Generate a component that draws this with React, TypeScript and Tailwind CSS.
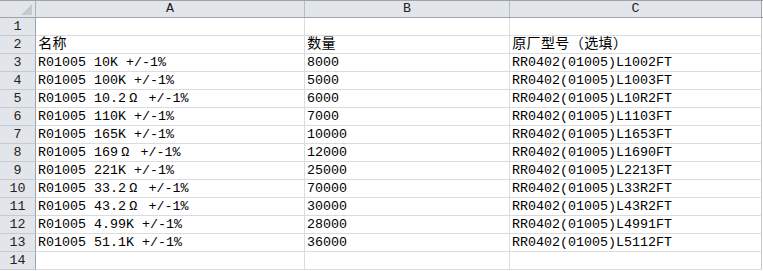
import React from 'react';

const rows: [string, string, string][] = [
  ['', '', ''],
  ['名称', '数量', '原厂型号（选填）'],
  ['R01005 10K +/-1%', '8000', 'RR0402(01005)L1002FT'],
  ['R01005 100K +/-1%', '5000', 'RR0402(01005)L1003FT'],
  ['R01005 10.2Ω +/-1%', '6000', 'RR0402(01005)L10R2FT'],
  ['R01005 110K +/-1%', '7000', 'RR0402(01005)L1103FT'],
  ['R01005 165K +/-1%', '10000', 'RR0402(01005)L1653FT'],
  ['R01005 169Ω +/-1%', '12000', 'RR0402(01005)L1690FT'],
  ['R01005 221K +/-1%', '25000', 'RR0402(01005)L2213FT'],
  ['R01005 33.2Ω +/-1%', '70000', 'RR0402(01005)L33R2FT'],
  ['R01005 43.2Ω +/-1%', '30000', 'RR0402(01005)L43R2FT'],
  ['R01005 4.99K +/-1%', '28000', 'RR0402(01005)L4991FT'],
  ['R01005 51.1K +/-1%', '36000', 'RR0402(01005)L5112FT'],
  ['', '', ''],
];

const font = "font-['Liberation_Mono','Noto_Sans_CJK_SC',monospace]";

// wide chars get a full-width box like SimSun; Ω stays in the mono face
function Text({ text }: { text: string }) {
  return (
    <>
      {Array.from(text).map((ch, i) => {
        const code = ch.charCodeAt(0);
        if (code <= 127) return <span key={i}>{ch}</span>;
        if (code < 0x2e80)
          return (
            <span key={i} className="inline-block w-[14.4px] text-center">
              {ch}
            </span>
          );
        return (
          <span key={i} className="inline-block w-[14.4px] text-center font-['Noto_Sans_CJK_SC',sans-serif] text-[14px]">
            {ch}
          </span>
        );
      })}
    </>
  );
}

function Cell({ text, last }: { text: string; last?: boolean }) {
  return (
    <div
      className={`h-[18px] border-r border-b border-b-[#dadcdd] pl-[2px] flex items-end whitespace-pre text-[13.33px] leading-[16px] text-black ${
        last ? 'border-r-[#c8c8c8]' : 'border-r-[#dadcdd]'
      }`}
    >
      <div className="leading-[16px]">
        <Text text={text} />
      </div>
    </div>
  );
}

export default function App() {
  return (
    <div className={`w-[763px] h-[271px] bg-white ${font}`}>
      <div className="border-t border-[#9aa3ae]">
        <div className="grid grid-cols-[36px_269px_205px_252px_1px] h-[17px] bg-[#e2e6eb] border-b border-[#9ba5b1] text-[13.33px] leading-[16px] text-[#222]">
          <div className="border-r border-[#a9b1bb] relative">
            <svg className="absolute right-[3px] bottom-[2px]" width="11" height="11" viewBox="0 0 11 11">
              <polygon points="11,0 11,11 0,11" fill="#c4c9cf" />
            </svg>
          </div>
          <div className="border-r border-[#b5bcc5] flex items-center justify-center">A</div>
          <div className="border-r border-[#b5bcc5] flex items-center justify-center">B</div>
          <div className="border-r border-[#9ba5b1] flex items-center justify-center">C</div>
          <div className="bg-white" />
        </div>
      </div>
      {rows.map((r, i) => (
        <div key={i} className="grid grid-cols-[36px_269px_205px_252px_1px]">
          <div className="h-[18px] bg-[#e2e6eb] border-r border-[#9ba5b1] border-b border-b-[#c5cbd2] flex items-end justify-center text-[13.33px] leading-[16px] text-[#222]">
            {i + 1}
          </div>
          <Cell text={r[0]} />
          <Cell text={r[1]} />
          <Cell text={r[2]} last />
          <div />
        </div>
      ))}
    </div>
  );
}
